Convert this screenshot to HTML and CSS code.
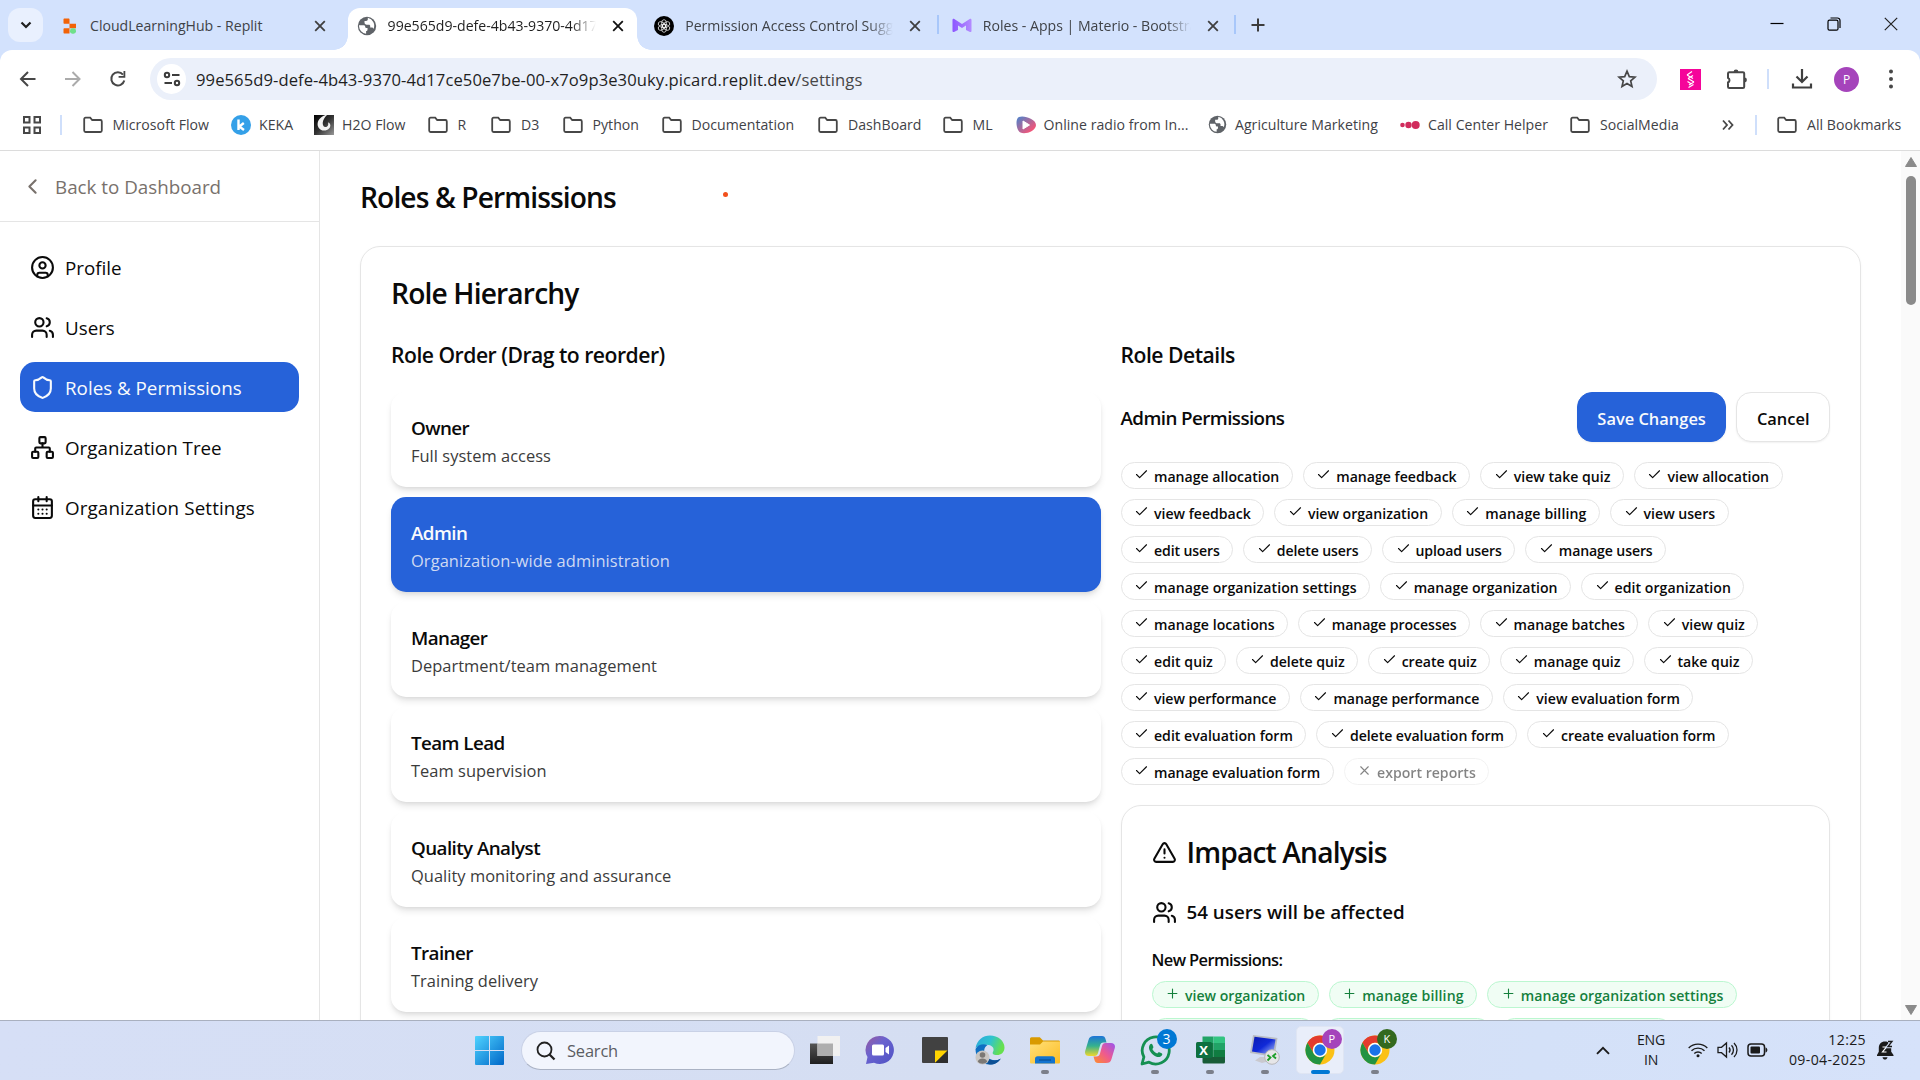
FILE: index.html
```html
<!DOCTYPE html>
<html lang="en">
<head>
<meta charset="utf-8">
<title>Roles &amp; Permissions</title>
<link rel="stylesheet" href="styles.css">
</head>
<body>
<svg class="defs" aria-hidden="true">
  <defs>
    <linearGradient id="g-win" x1="0" y1="0" x2="1" y2="1"><stop offset="0" stop-color="#4fd3ff"/><stop offset="1" stop-color="#0067c8"/></linearGradient>
    <linearGradient id="g-mat" x1="0" y1="0" x2="1" y2="0"><stop offset="0" stop-color="#8c57ff"/><stop offset="1" stop-color="#b48cff"/></linearGradient>
    <linearGradient id="g-radio" x1="0" y1="0" x2="1" y2="1"><stop offset="0.1" stop-color="#5b7fc4"/><stop offset="0.8" stop-color="#f0567a"/></linearGradient>
    <linearGradient id="g-h2o" x1="0" y1="0" x2="1" y2="1"><stop offset="0" stop-color="#000"/><stop offset="0.5" stop-color="#333"/><stop offset="1" stop-color="#999"/></linearGradient>
    <linearGradient id="g-meet" x1="0" y1="0" x2="1" y2="1"><stop offset="0" stop-color="#9a5a9e"/><stop offset="0.4" stop-color="#6a63cf"/><stop offset="1" stop-color="#4f52c4"/></linearGradient>
    <linearGradient id="g-edge" x1="0" y1="0" x2="1" y2="0.3"><stop offset="0" stop-color="#2aa7dc"/><stop offset="0.55" stop-color="#2fc3cf"/><stop offset="1" stop-color="#66e04e"/></linearGradient>
    <linearGradient id="g-fold" x1="0" y1="0" x2="1" y2="1"><stop offset="0" stop-color="#ffe07a"/><stop offset="1" stop-color="#fdbd24"/></linearGradient>
    <linearGradient id="g-cop1" x1="0" y1="0" x2="0" y2="1"><stop offset="0" stop-color="#1d74d8"/><stop offset="0.5" stop-color="#35b28d"/><stop offset="1" stop-color="#f0d72c"/></linearGradient>
    <linearGradient id="g-cop2" x1="1" y1="0" x2="0" y2="1"><stop offset="0" stop-color="#9a55ee"/><stop offset="0.5" stop-color="#ee5a8f"/><stop offset="1" stop-color="#ff8f2a"/></linearGradient>
    <linearGradient id="g-scr" x1="0" y1="0" x2="1" y2="1"><stop offset="0" stop-color="#0b1bb0"/><stop offset="0.5" stop-color="#1029d8"/><stop offset="1" stop-color="#b9cdf8"/></linearGradient>
    <linearGradient id="g-tv" x1="0" y1="0" x2="0" y2="1"><stop offset="0" stop-color="#555"/><stop offset="1" stop-color="#1f1f1f"/></linearGradient>
  </defs>
  <symbol id="close" viewBox="0 0 12 12"><path d="M1.2 1.2 10.8 10.8M10.8 1.2 1.2 10.8" fill="none" stroke="currentColor" stroke-width="1.8"/></symbol>
  <symbol id="globe" viewBox="0 0 20 20"><circle cx="10" cy="10" r="9.2" fill="#5f6368"/><path d="M2 9.2h4.6c1 0 1.6.6 1.6 1.5 0 .8.6 1.4 1.500 1.400h.8v1.600c0 .8-.6 1.400-1.400 1.400v2.600A8 8 0 0 1 2 10ZM10.800 1.800v1.500c0 1-.8 1.700-1.700 1.700H7.500v1.500c0 1.300 1 2.200 2.200 2.200h2.200c.8 0 1.300.6 1.300 1.400v1.500h1.300c1 0 1.700.5 2 1.300a8 8 0 0 0-5.700-11.100Z" fill="#fff"/></symbol>
  <symbol id="folder" viewBox="0 0 20 20"><path d="M1.200 4.200c0-.9.6-1.500 1.400-1.500h4.600l2 2.300h8.200c.8 0 1.400.6 1.400 1.400v9.200c0 .8-.6 1.400-1.400 1.400H2.600c-.8 0-1.400-.6-1.400-1.400Z" fill="none" stroke="#474747" stroke-width="1.800"/></symbol>
  <symbol id="check" viewBox="0 0 24 24"><path d="M20 6 9 17l-5-5"/></symbol>
  <symbol id="cross" viewBox="0 0 24 24"><path d="M18 6 6 18M6 6l12 12"/></symbol>
  <symbol id="plus" viewBox="0 0 24 24"><path d="M5 12h14M12 5v14"/></symbol>
  <symbol id="users" viewBox="0 0 24 24"><path d="M16 21v-2a4 4 0 0 0-4-4H6a4 4 0 0 0-4 4v2"/><circle cx="9" cy="7" r="4"/><path d="M22 21v-2a4 4 0 0 0-3-3.870M16 3.130a4 4 0 0 1 0 7.750"/></symbol>
  <symbol id="chrome" viewBox="0 0 30 30"><circle cx="15" cy="15" r="14.500" fill="#fbc116"/><path d="M2.440 7.750A14.500 14.500 0 0 1 27.560 7.750H15a7.250 7.250 0 0 0-6.280 10.870Z" fill="#e33b2e"/><path d="M2.440 7.750A14.500 14.500 0 0 0 15 29.500l6.280-10.880a7.250 7.250 0 0 1-12.560 0Z" fill="#229342"/><circle cx="15" cy="15" r="7.200" fill="#fff"/><circle cx="15" cy="15" r="5.700" fill="#1a73e8"/></symbol>
</svg>

<header class="browser">
  <div class="tabstrip">
    <button class="tab-search"><svg width="12" height="8" viewBox="0 0 12 8"><path d="M1.500 1.500 6 6l4.500-4.500" fill="none" stroke="#1f1f1f" stroke-width="2.200"/></svg></button>
    <div class="tabs">
      <div class="tab">
        <span class="fav"><svg width="20" height="20" viewBox="0 0 20 20"><path d="M5.500 2.500h4c.6 0 1 .4 1 1v4.300h-5c-.6 0-1-.4-1-1V3.500c0-.6.400-1 1-1ZM10.500 7.800H17v4.400h-6.500zM5.500 12.200h5v5.300h-5c-.6 0-1-.4-1-1v-3.300c0-.6.4-1 1-1Z" fill="#f26207"/><rect x="11" y="12.300" width="6" height="5.400" rx="2.400" fill="#6fe08a"/></svg></span>
        <span class="title">CloudLearningHub - Replit</span>
        <svg class="x" width="12" height="12"><use href="#close"/></svg>
      </div>
      <div class="tab active">
        <i class="foot left"></i><i class="foot right"></i>
        <span class="fav"><svg width="20" height="20"><use href="#globe"/></svg></span>
        <span class="title fade">99e565d9-defe-4b43-9370-4d17ce50</span>
        <svg class="x" width="12" height="12"><use href="#close"/></svg>
      </div>
      <div class="tab divided">
        <span class="fav"><svg width="20" height="20" viewBox="0 0 20 20"><circle cx="10" cy="10" r="10" fill="#000"/><g fill="none" stroke="#fff" stroke-width="0.700"><ellipse cx="10" cy="7.600" rx="2.500" ry="4"/><ellipse cx="10" cy="7.600" rx="2.500" ry="4" transform="rotate(60 10 10)"/><ellipse cx="10" cy="7.600" rx="2.500" ry="4" transform="rotate(120 10 10)"/><ellipse cx="10" cy="7.600" rx="2.500" ry="4" transform="rotate(180 10 10)"/><ellipse cx="10" cy="7.600" rx="2.500" ry="4" transform="rotate(240 10 10)"/><ellipse cx="10" cy="7.600" rx="2.500" ry="4" transform="rotate(300 10 10)"/></g></svg></span>
        <span class="title fade">Permission Access Control Suggestions</span>
        <svg class="x" width="12" height="12"><use href="#close"/></svg>
      </div>
      <div class="tab divided">
        <span class="fav"><svg width="20" height="20" viewBox="0 0 20 20"><path d="M.500 4c0-1 1-1.500 1.800-1L10 8l7.700-5c.8-.5 1.800 0 1.800 1v11c0 .8-.8 1.300-1.500 1l-4-2V9.500l-4 2.600-4-2.600V14l-4 2c-.7.300-1.500-.2-1.500-1Z" fill="url(#g-mat)"/></svg></span>
        <span class="title fade">Roles - Apps | Materio - Bootstrap</span>
        <svg class="x" width="12" height="12"><use href="#close"/></svg>
      </div>
    </div>
    <svg class="new-tab" width="14" height="14" viewBox="0 0 14 14"><path d="M7 .500v13M.500 7h13" stroke="#3c3c3c" stroke-width="2"/></svg>
    <div class="win-controls">
      <svg width="14" height="14" viewBox="0 0 14 14"><path d="M.500 6.500h13" stroke="#000" stroke-width="1.200"/></svg>
      <svg width="14" height="14" viewBox="0 0 14 14" fill="none" stroke="#000" stroke-width="1.200"><rect x="1" y="3.200" width="10" height="10" rx="1.500"/><path d="M3.500 1h7a2.500 2.500 0 0 1 2.500 2.500v7.500"/></svg>
      <svg width="14" height="14" viewBox="0 0 14 14"><path d="M.800.800l12.400 12.400M13.200.800.800 13.200" stroke="#222" stroke-width="1.200"/></svg>
    </div>
  </div>

  <div class="toolbar">
    <div class="nav-icons">
      <svg width="20" height="20" viewBox="0 0 20 20" fill="none" stroke="#474747" stroke-width="2"><path d="M17.500 10H3.500M10 3 3 10l7 7"/></svg>
      <svg width="20" height="20" viewBox="0 0 20 20" fill="none" stroke="#ababab" stroke-width="2"><path d="M2 10h14M9.500 3l7 7-7 7"/></svg>
      <svg width="20" height="20" viewBox="0 0 20 20"><path d="M16.300 11.500A6.600 6.600 0 1 1 15 5.600" fill="none" stroke="#474747" stroke-width="2"/><path d="M17.300 2v6.700h-6.700V7h4.900V2Z" fill="#474747"/></svg>
    </div>
    <div class="omnibox">
      <span class="site-info"><svg width="18" height="18" viewBox="0 0 18 18" fill="none" stroke="#3c3c3c" stroke-width="2"><circle cx="4" cy="5" r="2.200"/><path d="M9 5h7.500M1.500 13H9"/><circle cx="14" cy="13" r="2.200"/></svg></span>
      <span class="url">99e565d9-defe-4b43-9370-4d17ce50e7be-00-x7o9p3e30uky.picard.replit.dev<em>/settings</em></span>
      <svg class="star" width="20" height="20" viewBox="0 0 20 20"><path d="m10 2.200 2.300 5.400 5.800.5-4.400 3.800 1.300 5.700-5-3-5 3 1.300-5.700-4.400-3.800 5.800-.5Z" fill="none" stroke="#474747" stroke-width="1.700"/></svg>
    </div>
    <div class="ext">
      <svg class="e1" width="21" height="21" viewBox="0 0 21 21"><path fill="#f5059a" d="M0 0h21v21H0z"/><path d="m7 6 5-3.500M7 6l6 3.500M8 9.500l5-3M8 9.500l6 3.500M9 16l5-3M8.500 18.500l5-3M7.500 12.500l4 2.500" fill="none" stroke="#fff" stroke-width="1.200"/></svg>
      <svg class="e2" width="22" height="22" viewBox="0 0 22 22"><path d="M2 5.500c0-.8.500-1.300 1.300-1.300h13.600c.8 0 1.300.5 1.300 1.300v13.200c0 .8-.5 1.300-1.300 1.300H3.300c-.8 0-1.300-.5-1.300-1.300v-4.200a2.600 2.600 0 0 0 0-4.700Z" fill="none" stroke="#474747" stroke-width="2"/><path d="M7.600 4a2.400 2.400 0 0 1 4.800 0ZM18.500 9.600a2.400 2.400 0 0 1 0 4.800Z" fill="#474747"/></svg>
      <i class="sep"></i>
      <svg class="e3" width="22" height="22" viewBox="0 0 22 22"><path d="M11 1v12.500M5.500 8.500 11 14l5.500-5.500M2 15.500v4h18v-4" fill="none" stroke="#3f3f3f" stroke-width="2.200"/></svg>
      <span class="avatar">P</span>
      <svg class="e4" width="6" height="20" viewBox="0 0 6 20" fill="#474747"><circle cx="3" cy="2.500" r="2"/><circle cx="3" cy="10" r="2"/><circle cx="3" cy="17.500" r="2"/></svg>
    </div>
  </div>

  <div class="bookmarks">
    <svg class="apps" width="18" height="18" viewBox="0 0 18 18" fill="none" stroke="#474747" stroke-width="2"><path d="M1 1h5.500v5.500H1zM11.500 1H17v5.500h-5.500zM1 11.500h5.500V17H1zM11.500 11.500H17V17h-5.500z"/></svg>
    <i class="sep"></i>
    <div class="bm-list">
      <span class="bm"><svg width="20" height="20"><use href="#folder"/></svg>Microsoft Flow</span>
      <span class="bm site"><svg width="20" height="20" viewBox="0 0 20 20"><circle cx="10" cy="10" r="10" fill="#34a0e8"/><path d="M7.500 4.500v10.500M12.800 8 8.300 11.500l4.700 3.500" fill="none" stroke="#fff" stroke-width="2.400"/></svg>KEKA</span>
      <span class="bm site"><svg width="20" height="20" viewBox="0 0 20 20"><path fill="url(#g-h2o)" d="M0 0h20v20H0z"/><path d="M11.500 0C5 2 2 8 4.500 12.500 6.500 16 12 17 15.500 13 17 11 16.500 8 14 7.500c1 3-1 5-3 4.500C7.500 11 8 4.500 13 0Z" fill="#f4f4f4"/></svg>H2O Flow</span>
      <span class="bm"><svg width="20" height="20"><use href="#folder"/></svg>R</span>
      <span class="bm"><svg width="20" height="20"><use href="#folder"/></svg>D3</span>
      <span class="bm"><svg width="20" height="20"><use href="#folder"/></svg>Python</span>
      <span class="bm"><svg width="20" height="20"><use href="#folder"/></svg>Documentation</span>
      <span class="bm"><svg width="20" height="20"><use href="#folder"/></svg>DashBoard</span>
      <span class="bm"><svg width="20" height="20"><use href="#folder"/></svg>ML</span>
      <span class="bm site"><svg width="20" height="20" viewBox="0 0 20 20"><path d="M3 2C8 0 20 4 20 10S9 20 4.500 17.500C0 15-1 3.500 3 2Z" fill="url(#g-radio)"/><path d="M7 6v8l6.500-4Z" fill="#fff" stroke="#fff" stroke-linejoin="round"/></svg>Online radio from In...</span>
      <span class="bm site"><svg width="19" height="19"><use href="#globe"/></svg>Agriculture Marketing</span>
      <span class="bm site"><svg width="20" height="20" viewBox="0 0 20 20" fill="#d12c5d"><circle cx="2.500" cy="10" r="2.300"/><circle cx="8.500" cy="10" r="3.200"/><circle cx="15.700" cy="10" r="4"/></svg>Call Center Helper</span>
      <span class="bm"><svg width="20" height="20"><use href="#folder"/></svg>SocialMedia</span>
    </div>
    <svg class="more" width="12" height="12" viewBox="0 0 12 12" fill="none" stroke="#474747" stroke-width="1.800"><path d="m1 1.500 4 4.500-4 4.500M6.500 1.500l4 4.500-4 4.500"/></svg>
    <i class="sep"></i>
    <span class="bm all"><svg width="20" height="20"><use href="#folder"/></svg>All Bookmarks</span>
  </div>
</header>

<div class="page">
  <aside class="sidebar">
    <a class="back"><svg class="ico" viewBox="0 0 24 24"><path d="m15 18-6-6 6-6"/></svg>Back to Dashboard</a>
    <nav class="menu">
      <a class="item"><svg class="ico" viewBox="0 0 24 24"><circle cx="12" cy="12" r="10"/><circle cx="12" cy="10" r="3"/><path d="M7 20.660V19a2 2 0 0 1 2-2h6a2 2 0 0 1 2 2v1.660"/></svg>Profile</a>
      <a class="item"><svg class="ico"><use href="#users"/></svg>Users</a>
      <a class="item current"><svg class="ico" viewBox="0 0 24 24"><path d="M20 13c0 5-3.500 7.500-7.660 8.950a1 1 0 0 1-.67-.01C7.500 20.500 4 18 4 13V6a1 1 0 0 1 1-1c2 0 4.500-1.200 6.240-2.720a1.170 1.170 0 0 1 1.520 0C14.510 3.810 17 5 19 5a1 1 0 0 1 1 1z"/></svg>Roles &amp; Permissions</a>
      <a class="item"><svg class="ico" viewBox="0 0 24 24"><rect x="16" y="16" width="6" height="6" rx="1"/><rect x="2" y="16" width="6" height="6" rx="1"/><rect x="9" y="2" width="6" height="6" rx="1"/><path d="M5 16v-3a1 1 0 0 1 1-1h12a1 1 0 0 1 1 1v3M12 12V8"/></svg>Organization Tree</a>
      <a class="item wide"><svg class="ico" viewBox="0 0 24 24"><path d="M8 2v4M16 2v4M3 10h18"/><rect x="3" y="4" width="18" height="18" rx="2"/><path d="M8 14h.01M12 14h.01M16 14h.01M8 18h.01M12 18h.01M16 18h.01"/></svg>Organization Settings</a>
    </nav>
  </aside>

  <main class="content">
    <h1>Roles &amp; Permissions</h1>
    <i class="pointer"></i>
    <section class="panel">
      <h2>Role Hierarchy</h2>
      <div class="columns">
        <div class="order">
          <h3>Role Order (Drag to reorder)</h3>
          <div class="roles">
            <article class="role"><b>Owner</b><p>Full system access</p></article>
            <article class="role selected"><b>Admin</b><p>Organization-wide administration</p></article>
            <article class="role"><b>Manager</b><p>Department/team management</p></article>
            <article class="role"><b>Team Lead</b><p>Team supervision</p></article>
            <article class="role"><b>Quality Analyst</b><p>Quality monitoring and assurance</p></article>
            <article class="role"><b>Trainer</b><p>Training delivery</p></article>
          </div>
        </div>
        <div class="details">
          <h3>Role Details</h3>
          <div class="bar">
            <h4>Admin Permissions</h4>
            <button class="btn primary">Save Changes</button>
            <button class="btn">Cancel</button>
          </div>
          <div class="chips">
            <span class="chip"><svg><use href="#check"/></svg>manage allocation</span>
            <span class="chip"><svg><use href="#check"/></svg>manage feedback</span>
            <span class="chip"><svg><use href="#check"/></svg>view take quiz</span>
            <span class="chip"><svg><use href="#check"/></svg>view allocation</span>
            <span class="chip"><svg><use href="#check"/></svg>view feedback</span>
            <span class="chip"><svg><use href="#check"/></svg>view organization</span>
            <span class="chip loose"><svg><use href="#check"/></svg>manage billing</span>
            <span class="chip"><svg><use href="#check"/></svg>view users</span>
            <span class="chip tight"><svg><use href="#check"/></svg>edit users</span>
            <span class="chip tight"><svg><use href="#check"/></svg>delete users</span>
            <span class="chip tight"><svg><use href="#check"/></svg>upload users</span>
            <span class="chip tight"><svg><use href="#check"/></svg>manage users</span>
            <span class="chip loose-s"><svg><use href="#check"/></svg>manage organization settings</span>
            <span class="chip"><svg><use href="#check"/></svg>manage organization</span>
            <span class="chip loose-s"><svg><use href="#check"/></svg>edit organization</span>
            <span class="chip loose-s"><svg><use href="#check"/></svg>manage locations</span>
            <span class="chip tight-s"><svg><use href="#check"/></svg>manage processes</span>
            <span class="chip tight-s"><svg><use href="#check"/></svg>manage batches</span>
            <span class="chip"><svg><use href="#check"/></svg>view quiz</span>
            <span class="chip loose-s"><svg><use href="#check"/></svg>edit quiz</span>
            <span class="chip"><svg><use href="#check"/></svg>delete quiz</span>
            <span class="chip"><svg><use href="#check"/></svg>create quiz</span>
            <span class="chip"><svg><use href="#check"/></svg>manage quiz</span>
            <span class="chip"><svg><use href="#check"/></svg>take quiz</span>
            <span class="chip tight-s"><svg><use href="#check"/></svg>view performance</span>
            <span class="chip tight-s"><svg><use href="#check"/></svg>manage performance</span>
            <span class="chip"><svg><use href="#check"/></svg>view evaluation form</span>
            <span class="chip"><svg><use href="#check"/></svg>edit evaluation form</span>
            <span class="chip tight-s"><svg><use href="#check"/></svg>delete evaluation form</span>
            <span class="chip tight-s"><svg><use href="#check"/></svg>create evaluation form</span>
            <span class="chip tight-s"><svg><use href="#check"/></svg>manage evaluation form</span>
            <span class="chip off"><svg><use href="#cross"/></svg>export reports</span>
          </div>
          <section class="impact">
            <h2><svg class="ico" viewBox="0 0 24 24"><path d="m21.730 18-8-14a2 2 0 0 0-3.480 0l-8 14A2 2 0 0 0 4 21h16a2 2 0 0 0 1.730-3M12 9v4M12 17h.01"/></svg>Impact Analysis</h2>
            <div class="affected"><svg class="ico"><use href="#users"/></svg>54 users will be affected</div>
            <h5>New Permissions:</h5>
            <div class="chips added">
              <span class="chip"><svg><use href="#plus"/></svg>view organization</span>
              <span class="chip loose"><svg><use href="#plus"/></svg>manage billing</span>
              <span class="chip loose-s"><svg><use href="#plus"/></svg>manage organization settings</span>
              <span class="chip blank w1"></span>
              <span class="chip blank w2"></span>
              <span class="chip blank w3"></span>
            </div>
          </section>
        </div>
      </div>
    </section>
  </main>

  <div class="scrollbar">
    <svg width="12" height="10" viewBox="0 0 12 10"><path d="M6 .500 11.500 9.500H.500Z" fill="#8a8a8a" stroke="#8a8a8a" stroke-linejoin="round"/></svg>
    <i class="thumb"></i>
    <svg class="down" width="12" height="10" viewBox="0 0 12 10"><path d="M6 9.500 11.500.500H.500Z" fill="#8a8a8a" stroke="#8a8a8a" stroke-linejoin="round"/></svg>
  </div>
</div>

<footer class="taskbar">
  <div class="launcher">
    <svg class="start" width="29" height="29" viewBox="0 0 29 29"><path d="M1 0h13v14H0V1a1 1 0 0 1 1-1ZM15 0h13a1 1 0 0 1 1 1v13H15zM0 15h14v14H1a1 1 0 0 1-1-1zM15 15h14v13a1 1 0 0 1-1 1H15z" fill="url(#g-win)"/></svg>
    <div class="search"><svg width="20" height="20" viewBox="0 0 20 20" fill="none" stroke="#222" stroke-width="1.800"><circle cx="8.500" cy="8.500" r="7"/><path d="m13.500 13.500 5 5" stroke-width="2.300"/></svg>Search</div>
    <div class="apps-row">
      <span class="app"><svg width="30" height="30" viewBox="0 0 30 30"><path fill="url(#g-tv)" d="M0 8.500h23V29H0z"/><path fill="#f1f1f1" d="M7.500 1H30v20H7.500z"/><path fill="#aeaeae" d="M7.500 8.500H23V21H7.500z"/></svg></span>
      <span class="app"><svg width="30" height="30" viewBox="0 0 30 30"><path d="M15 1a14 14 0 1 1-6 26.700L1 29l1.500-7A14 14 0 0 1 15 1Z" fill="url(#g-meet)"/><rect x="7" y="9.500" width="12" height="11" rx="1.500" fill="#fff"/><path d="m20.500 13 3.500-2.500v9L20.500 17Z" fill="#fff"/></svg></span>
      <span class="app"><svg width="28" height="28" viewBox="0 0 28 28"><rect x="1" y="1" width="26" height="26" rx="1" fill="#414141"/><path d="M14 27V14.500h12.500Z" fill="#ffd400"/><path d="M14 27 27 14.500V27Z" fill="#2e2e2e"/></svg></span>
      <span class="app"><svg width="30" height="30" viewBox="0 0 30 30"><path d="M.500 13C2 5 8 .500 15 .500c8 0 14.500 5.500 14.500 12 0 5-3.500 7.500-7.500 7.500s-5-1.500-4-3c1.500-3 0-6.500-4.500-7C7.500 9 3 11 .500 13Z" fill="url(#g-edge)"/><path d="M.500 14C3 9.500 8.500 8.500 12.500 10 9 12 8 17 11 21s9 5 14 3.500c-2 3-6 5-10 5C6 29.500.500 22 .500 14Z" fill="#0f6fc2"/><path d="M10 17c1 8 9 10.500 16 6.500-3 4-6 6-11 6-6 0-7-9-5-12.500Z" fill="#0c4f94"/><circle cx="7.500" cy="22.500" r="7" fill="#c9c6c3"/><circle cx="7.500" cy="20" r="2.800" fill="#7b7875"/><path d="M2.800 26.500c1-4 8.400-4 9.400 0-2 3-7.400 3-9.400 0Z" fill="#7b7875"/></svg></span>
      <span class="app running"><svg width="30" height="30" viewBox="0 0 30 30"><path d="M0 4c0-1 .6-1.700 1.500-1.700h8.300L13 5.500h15.500c1 0 1.500.7 1.500 1.500v6H0Z" fill="#d99a00"/><path d="M0 9.500h10L13 6.500h17v20.700c0 .8-.6 1.300-1.300 1.300H1.300C.600 28.500 0 28 0 27.200Z" fill="url(#g-fold)"/><path d="M5 28.500V24c0-1.700 1-2.700 2.700-2.700h14.600C24 21.300 25 22.300 25 24v4.500Z" fill="#1374cf"/><path d="M9 25h12" stroke="#0a4f94" stroke-width="1.200"/></svg></span>
      <span class="app"><svg width="30" height="30" viewBox="0 0 30 30"><path d="M9 1h8c2 0 3 1 3.500 3l1 3.500h-3c-2 0-3 1-3.500 3L13 18c-.6 2-1.500 3-3.500 3H4c-3 0-4.500-2-3.800-5L3.500 5C4.300 2 6 1 9 1Z" fill="url(#g-cop1)"/><path d="M21 28h-8c-2 0-3-1-3.500-3l-1-3.500h3c2 0 3-1 3.500-3l2-7.500c.6-2 1.500-3 3.500-3H26c3 0 4.500 2 3.800 5L26.500 24c-.8 3-2.500 4-5.500 4Z" fill="url(#g-cop2)"/></svg></span>
      <span class="app running"><svg width="31" height="31" viewBox="0 0 31 31"><path d="M2 29l1.900-7A13.500 13.500 0 1 1 9 27.200Z" fill="none" stroke="#159052" stroke-width="2.800" stroke-linejoin="round"/><path d="M10 9.500c1-1 2-.8 2.500.3l.8 2c.3.800-.2 1.400-1 2.200 1.200 2.200 2.700 3.500 5 4.500.8-1 1.300-1.600 2.100-1.200l2.200 1c1 .5.900 1.500 0 2.500-2 2.200-5.500 1.400-8.500-1-3-2.500-5.600-7-3.100-10.300Z" fill="#159052"/></svg><em class="badge blue">3</em></span>
      <span class="app running"><svg width="30" height="30" viewBox="0 0 30 30"><path fill="#21a366" d="M7.500 1.500h11V8h-11z"/><path fill="#33c481" d="M18.500 1.500h10A1.500 1.500 0 0 1 30 3v5H18.500z"/><path fill="#107c41" d="M7.500 8h11v14h-11z"/><path fill="#21a366" d="M18.500 8H30v7H18.500z"/><path fill="#107c41" d="M18.500 15H30v7H18.500z"/><path fill="#185c37" d="M7.500 22H30v5a1.500 1.500 0 0 1-1.500 1.500H9A1.500 1.500 0 0 1 7.500 27z"/><rect x="1" y="7" width="16" height="16" rx="1.500" fill="#0d7040"/></svg><em class="xl">X</em></span>
      <span class="app running"><svg width="30" height="30" viewBox="0 0 30 30"><path d="M10 22h9l1 4-8 2-7-2.500Z" fill="#c9c9cf"/><path d="m3 0 24.500 3-3 19L0 18Z" fill="#b9bcc4"/><path d="m4.500 1.800 21 2.700-2.500 15.500L2 16.500Z" fill="url(#g-scr)"/><circle cx="22" cy="22" r="7.300" fill="#e6e6e8" stroke="#b6b6b8"/><path d="m17.500 20 3 2.500-3 3M26 18.500 23 21l3 2.500" fill="none" stroke="#1d9e28" stroke-width="1.800"/></svg></span>
      <span class="app focused"><svg width="30" height="30"><use href="#chrome"/></svg><em class="badge purple">P</em></span>
      <span class="app running"><svg width="30" height="30"><use href="#chrome"/></svg><em class="badge green">K</em></span>
    </div>
  </div>
  <div class="tray">
    <svg width="14" height="9" viewBox="0 0 14 9"><path d="m1 7.800 6-6 6 6" fill="none" stroke="#1b1b1b" stroke-width="1.900"/></svg>
    <span class="lang">ENG<br>IN</span>
    <svg class="wifi" width="20" height="16" viewBox="0 0 20 16" fill="none" stroke="#1b1b1b" stroke-width="1.400"><path d="M.700 6a13 13 0 0 1 18.600 0M3.500 8.800a9.200 9.200 0 0 1 13 0M6.300 11.500a5.300 5.300 0 0 1 7.400 0"/><circle cx="10" cy="13.800" r="1.500" fill="#1b1b1b" stroke="none"/></svg>
    <svg class="sound" width="21" height="18" viewBox="0 0 21 18" fill="none" stroke="#1b1b1b" stroke-width="1.300"><path d="M1 6.300h3.500L9.500 2v14l-5-4.300H1ZM12 6.500c1.300 1.500 1.300 3.500 0 5M14.500 4.300c2.600 2.700 2.600 6.700 0 9.400M17 2c4 4 4 10 0 14"/></svg>
    <svg class="battery" width="21" height="14" viewBox="0 0 21 14"><rect x="1" y="1" width="16.500" height="12" rx="3" fill="none" stroke="#1b1b1b" stroke-width="1.500"/><rect x="3.500" y="3.500" width="9.500" height="7" rx="1" fill="#1b1b1b"/><path d="M18.500 4.500c2.500.5 2.500 4.500 0 5Z" fill="#1b1b1b"/></svg>
    <span class="clock">12:25<br>09-04-2025</span>
    <span class="bell"><svg width="17" height="20" viewBox="0 0 17 20"><path d="M8 1.500c3.800 0 6.200 2.700 6.200 6.300v4L16.500 15v1H0v-1l1.800-3.200v-4C1.800 4.200 4.200 1.500 8 1.500ZM5.500 17.200h5c-.3 1.500-1.300 2.300-2.500 2.300s-2.200-.8-2.500-2.300Z" fill="#1b1b1b"/><path d="M5.500 7h4l-4 5h4" fill="none" stroke="#fff" stroke-width="1.200"/><path d="M11 1.500h4l-4 5h4" fill="none" stroke="#d5e1f7" stroke-width="3.500"/><path d="M11 1.500h4l-4 5h4" fill="none" stroke="#1b1b1b" stroke-width="1.300"/></svg></span>
  </div>
</footer>
</body>
</html>
```
FILE: styles.css
```css
* { box-sizing: border-box; }

body {
  margin: 0;
  width: 1920px;
  height: 1080px;
  overflow: hidden;
  display: flex;
  flex-direction: column;
  background: #fff;
  color: #0a0a0a;
  font-family: "Open Sans", "Noto Sans", sans-serif;
}

svg { display: block; flex: none; }
.defs { position: absolute; width: 0; height: 0; }
button { font: inherit; border: 0; padding: 0; }
h1, h2, h3, h4, h5, p { margin: 0; }
em { font-style: normal; }

/* Browser window */
.browser {
  height: 151px;
  flex: none;
  background: #d3e2fd;
  border-bottom: 1px solid #dcdcdc;
  display: flex;
  flex-direction: column;
}

.tabstrip { height: 50px; display: flex; align-items: stretch; }
.tab-search {
  width: 35px; height: 34px; margin: 8px 5px 0 8px;
  border-radius: 12px; background: #e9f0fe;
  display: grid; place-items: center;
}
.tabs { display: flex; }
.tab {
  position: relative;
  width: 297.6px; padding: 1px 0 0 11px;
  display: flex; align-items: center;
  color: #3f4247; font-size: 14.1px; line-height: 20px;
}
.tab > .fav, .tab > .title, .tab > .x { position: relative; }
.tab .fav { width: 20px; margin-right: 11px; }
.tab .title { width: 208px; white-space: nowrap; overflow: hidden; }
.tab .fade { -webkit-mask-image: linear-gradient(90deg, #000 88%, transparent); mask-image: linear-gradient(90deg, #000 88%, transparent); }
.tab .x { margin-left: 16px; color: #3f3f3f; }
.tab.active { color: #1f1f1f; }
.tab.active .x { color: #111; }
.tab.active::before {
  content: ""; position: absolute; left: 2px; right: 6px; top: 8px; bottom: 0;
  background: #fff; border-radius: 12px 12px 0 0;
}
.foot { position: absolute; bottom: 0; width: 14px; height: 14px; }
.foot.left { left: -12px; background: radial-gradient(circle at 0 0, transparent 13.5px, #fff 14px); }
.foot.right { right: -8px; background: radial-gradient(circle at 100% 0, transparent 13.5px, #fff 14px); }
.tab.divided::after {
  content: ""; position: absolute; right: 2px; top: 15px; width: 2px; height: 19px;
  background: #a8c7fa;
}
.new-tab { margin: 18px 0 0 13px; }
.win-controls { margin: 17px 22px 0 auto; display: flex; gap: 43px; }

.toolbar {
  height: 58px; background: #fff; border-radius: 12px 12px 0 0;
  display: flex; align-items: center;
}
.nav-icons { width: 150px; padding-left: 18px; display: flex; gap: 25px; }
.omnibox {
  width: 1507px; height: 42px; border-radius: 21px; background: #ebf0fa;
  display: flex; align-items: center;
}
.site-info {
  width: 29px; height: 30px; margin: 0 10px 0 7px; border-radius: 50%; background: #fff;
  display: grid; place-items: center;
}
.url { font-size: 16.6px; letter-spacing: 0.075px; color: #1f1f1f; }
.url em { color: #474747; }
.star { margin-left: auto; margin-right: 20px; }
.ext { display: flex; align-items: center; flex: 1; }
.e1 { margin-left: 23px; }
.e2 { margin-left: 25px; }
.sep { width: 2px; height: 20px; background: #cfdffb; flex: none; }
.ext .sep { margin-left: 19px; }
.e3 { margin-left: 22px; }
.avatar {
  width: 25px; height: 25px; margin-left: 21px; border-radius: 50%;
  background: #a544bb; color: #fff; font-size: 12px; line-height: 25px; text-align: center;
}
.e4 { margin-left: 29px; }

.bookmarks {
  flex: 1; background: #fff; padding: 0 18px 9px 23px;
  display: flex; align-items: center;
  font-size: 14.1px; letter-spacing: 0.03px; color: #3f4247;
}
.bookmarks .apps { margin-right: 19px; }
.bm-list {
  width: 1645px; padding-left: 20.5px;
  display: grid;
  grid-template-columns: 148.5px 83px 113.5px 63.5px 71.5px 99px 156.5px 124.5px 73px 192.5px 192px 170px 1fr;
}
.bm { display: flex; align-items: center; gap: 10px; white-space: nowrap; }
.bm.site { gap: 8px; }
.more { margin-left: 15px; margin-right: 21px; }
.bm.all { margin-left: 20px; }

/* Page */
.page { height: 869px; flex: none; display: flex; overflow: hidden; background: #fff; }

.ico {
  width: 25px; height: 25px; fill: none; stroke: currentColor;
  stroke-width: 2; stroke-linecap: round; stroke-linejoin: round;
}

.sidebar { width: 320px; flex: none; border-right: 1px solid #e5e5e5; }
.back {
  height: 71px; padding: 1px 20px 0; border-bottom: 1px solid #e5e5e5;
  display: flex; align-items: center; gap: 10px;
  font-size: 18.8px; color: #78716c;
}
.menu { padding: 20px; display: flex; flex-direction: column; gap: 10px; }
.item {
  height: 50px; padding: 1px 10px 0; border-radius: 15px;
  display: flex; align-items: center; gap: 10px;
  font-size: 18.8px; line-height: 30px;
}
.item.wide { letter-spacing: 0.13px; }
.item.current { background: #2662d9; color: #f8fafc; }

.content { position: relative; width: 1581px; padding: 26px 40px 0; }
h1, h2 { font-size: 28.2px; font-weight: 600; line-height: 40px; letter-spacing: -0.86px; }
h1 { letter-spacing: -0.91px; }
.pointer { position: absolute; left: 403px; top: 41px; width: 5px; height: 5px; border-radius: 50%; background: #f2501c; }

.panel {
  height: 1200px; margin-top: 29px; padding: 26px 30px;
  border: 1px solid #e5e5e5; border-radius: 20px; box-shadow: 0 1px 3px rgba(0, 0, 0, 0.04);
}
.columns { margin-top: 24px; display: grid; grid-template-columns: 1fr 1fr; gap: 20px; }
h3 { font-size: 21.15px; font-weight: 600; line-height: 35px; letter-spacing: -0.5px; }
.roles { margin-top: 20px; display: flex; flex-direction: column; gap: 10px; }
.role {
  height: 95px; padding: 21px 20px 0; border-radius: 15px; background: #fff;
  box-shadow: 0 5px 7.5px -1px rgba(0, 0, 0, 0.1), 0 2.5px 5px -2.5px rgba(0, 0, 0, 0.1);
}
.role b { display: block; font-size: 18.8px; font-weight: 600; line-height: 30px; letter-spacing: -0.57px; }
.role p { font-size: 16.45px; line-height: 25px; letter-spacing: 0.03px; color: #3b3b3b; }
.role.selected { background: #2662d9; color: #f8fafc; }
.role.selected p { color: #ced9f2; letter-spacing: 0.07px; }

.bar { height: 50px; margin-top: 20px; display: flex; align-items: center; gap: 10px; }
h4 { flex: 1; font-size: 18.8px; font-weight: 600; line-height: 30px; letter-spacing: -0.58px; padding-top: 2px; }
.btn {
  height: 50px; padding: 2px 19.5px 0; border-radius: 15px; background: #fff;
  border: 1px solid #e5e5e5; box-shadow: 0 1px 2px rgba(0, 0, 0, 0.06);
  font-size: 16.45px; font-weight: 600; color: #0a0a0a;
}
.btn.primary { background: #2662d9; border-color: #2662d9; color: #f8fafc; }

.chips { margin-top: 20px; display: flex; flex-wrap: wrap; gap: 10px; }
.chip {
  height: 27px; padding: 2px 12.5px 0; border: 1px solid #e5e5e5; border-radius: 14px;
  display: flex; align-items: center; gap: 5px;
  font-size: 14.1px; font-weight: 600; line-height: 20px; white-space: nowrap;
}
.chip svg {
  width: 15px; height: 15px; margin-top: -4px; fill: none; stroke: currentColor;
  stroke-width: 1.8; stroke-linecap: round; stroke-linejoin: round;
}
.chip.off { opacity: 0.5; }
.chip.tight { letter-spacing: -0.12px; }
.chip.tight-s { letter-spacing: -0.05px; }
.chip.loose { letter-spacing: 0.13px; }
.chip.loose-s { letter-spacing: 0.05px; }

.impact {
  height: 500px; margin-top: 20px; padding: 26px 30px;
  border: 1px solid #e5e5e5; border-radius: 20px; box-shadow: 0 1px 3px rgba(0, 0, 0, 0.04);
}
.impact h2 { display: flex; align-items: center; gap: 10px; }
.affected {
  margin-top: 25px; height: 30px; display: flex; align-items: center; gap: 10px;
  font-size: 18.8px; font-weight: 600;
}
h5 { margin-top: 20px; font-size: 16.45px; font-weight: 600; line-height: 25px; letter-spacing: -0.6px; }
.added { margin-top: 9px; }
.added .chip { background: #f0fdf4; border-color: #bbf7d0; color: #15803d; }
.w1 { width: 163px; }
.w2 { width: 166px; }
.w3 { width: 171px; }

.scrollbar {
  width: 19px; padding: 6px 0 5px; background: #fafafa;
  display: flex; flex-direction: column; align-items: center;
}
.thumb { width: 10px; height: 129px; margin-top: 9px; border-radius: 5px; background: #8a8a8a; }
.scrollbar .down { margin-top: auto; }

/* Taskbar */
.taskbar {
  flex: 1; padding-left: 475px; border-top: 1px solid #a9b0bf;
  background: linear-gradient(100deg, #d6dff6 0%, #d5def2 50%, #d4e1f8 80%, #d6e2fa 100%);
  display: flex; justify-content: space-between; align-items: stretch;
}
.launcher { display: flex; align-items: center; }
.search {
  width: 274px; height: 39px; margin: 0 2px 0 17px; padding-left: 14px; border-radius: 20px;
  background: #f2f5fd; border: 1px solid #c9d1e6; border-bottom-color: #aab2c4;
  display: flex; align-items: center; gap: 11px;
  font-size: 16.45px; letter-spacing: -0.17px; color: #5b5d63;
}
.apps-row { display: flex; height: 100%; }
.app {
  position: relative; width: 55.1px; height: 100%; padding-bottom: 1px;
  display: grid; place-items: center;
}
.app > svg { position: relative; }
.running::after, .focused::after {
  content: ""; position: absolute; left: 50%; bottom: 6px; width: 8px; height: 4px;
  margin-left: -4px; border-radius: 2px; background: #7b7f8a;
}
.focused::after { width: 19px; margin-left: -9px; background: #0078d4; }
.focused::before {
  content: ""; position: absolute; left: 3.5px; right: 3.5px; top: 5px; bottom: 6px;
  border-radius: 5px; background: #e9eefa; border: 1px solid #dfe5f3;
}
.badge {
  position: absolute; left: 29px; top: 8px; width: 20px; height: 20px; border-radius: 50%;
  color: #fff; font-size: 14px; line-height: 20px; text-align: center;
}
.badge.blue { background: #0078d4; }
.badge.purple { background: #a544bb; font-size: 11px; }
.badge.green { background: #33691e; font-size: 11px; }
.xl { position: absolute; left: 15px; top: 20px; width: 12px; font-size: 13px; line-height: 18px; font-weight: 700; color: #fff; text-align: center; }

.tray { display: flex; align-items: center; padding: 0 26px 1px 0; font-size: 14.1px; line-height: 20px; color: #1b1b1b; }
.lang { width: 30px; margin: 0 22px 0 26px; text-align: center; letter-spacing: -0.2px; }
.sound { margin-left: 9px; }
.battery { margin-left: 9px; }
.clock { width: 80px; margin-left: 18px; margin-right: 11px; text-align: right; letter-spacing: 0.35px; white-space: nowrap; }
```
